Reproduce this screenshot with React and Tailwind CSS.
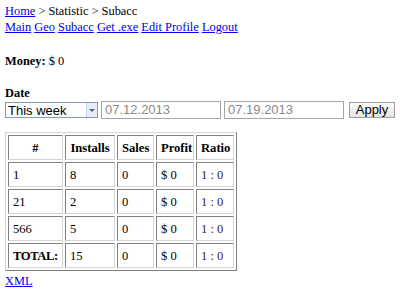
export default function App() {
  const rows = [
    ["1", "8", "0", "$ 0", "1 : 0"],
    ["21", "2", "0", "$ 0", "1 : 0"],
    ["566", "5", "0", "$ 0", "1 : 0"],
  ];
  const cell =
    "border border-solid border-t-[#808080] border-l-[#808080] border-r-[#d4d4d4] border-b-[#d4d4d4] px-[4px] pt-[5px] pb-[3px] whitespace-nowrap overflow-hidden";
  const widths = ["w-[55px]", "w-[50px]", "w-[37px]", "w-[38px]", "w-[38px]"];
  const link = "text-[#0000ee] underline";
  return (
    <div className="min-h-[295px] bg-white px-[5px] pt-[3px] text-[12.4px] leading-[16px] text-black font-['Liberation_Serif','Times_New_Roman',serif]">
      <div>
        <a className={link}>Home</a> &gt; Statistic &gt; Subacc
      </div>
      <div>
        <a className={link}>Main</a> <a className={link}>Geo</a>{" "}
        <a className={link}>Subacc</a> <a className={link}>Get .exe</a>{" "}
        <a className={link}>Edit Profile</a> <a className={link}>Logout</a>
      </div>
      <div className="mt-[18px]">
        <b>Money:</b> $ 0
      </div>
      <div className="mt-[16px] font-bold">Date</div>
      <div className="flex items-start font-['Liberation_Sans',Arial,sans-serif] text-[13px]">
        <div className="mt-[1px] flex h-[16px] w-[93px] border border-[#7f9db9] bg-white">
          <div className="flex-1 pl-[2px] leading-[15px]">This week</div>
          <div className="flex w-[11px] items-center justify-center border-l border-[#c3d3fd] bg-[#e6ebf5]">
            <div className="h-0 w-0 border-x-[3px] border-t-[3px] border-x-transparent border-t-[#4d6185]"></div>
          </div>
        </div>
        <div className="ml-[3px] h-[18px] w-[120px] border border-[#a5a5a5] pl-[3px] leading-[16px] text-[#8a8a8a]">
          07.12.2013
        </div>
        <div className="ml-[3px] h-[18px] w-[120px] border border-[#a5a5a5] pl-[3px] leading-[16px] text-[#8a8a8a]">
          07.19.2013
        </div>
        <div className="ml-[5px] mt-[1px] flex h-[16px] w-[46px] items-center justify-center border border-[#a0a0a0] bg-gradient-to-b from-[#fdfdfd] to-[#e3e3e3] leading-[14px]">
          Apply
        </div>
      </div>
      <table className="mt-[13px] w-[232px] table-fixed border-separate border-spacing-[2px] border border-solid border-t-[#d4d4d4] border-l-[#d4d4d4] border-r-[#808080] border-b-[#808080] text-[12.6px] leading-[15px]">
        <thead>
          <tr>
            {["#", "Installs", "Sales", "Profit", "Ratio"].map((h, i) => (
              <th key={h} className={`${cell} ${widths[i]} text-center font-bold`}>
                {h}
              </th>
            ))}
          </tr>
        </thead>
        <tbody>
          {rows.map((r, ri) => (
            <tr key={ri}>
              {r.map((c, i) => (
                <td key={i} className={`${cell} ${widths[i]} text-left ${i === 4 ? "text-[#3a2050]" : ""}`}>
                  {c}
                </td>
              ))}
            </tr>
          ))}
          <tr>
            <td className={`${cell} ${widths[0]} text-left font-bold tracking-[-0.4px]`}>TOTAL:</td>
            <td className={`${cell} ${widths[1]} text-left`}>15</td>
            <td className={`${cell} ${widths[2]} text-left`}>0</td>
            <td className={`${cell} ${widths[3]} text-left`}>$ 0</td>
            <td className={`${cell} ${widths[4]} text-left text-[#3a2050]`}>1 : 0</td>
          </tr>
        </tbody>
      </table>
      <div className="mt-[2px]">
        <a className={link}>XML</a>
      </div>
    </div>
  );
}
